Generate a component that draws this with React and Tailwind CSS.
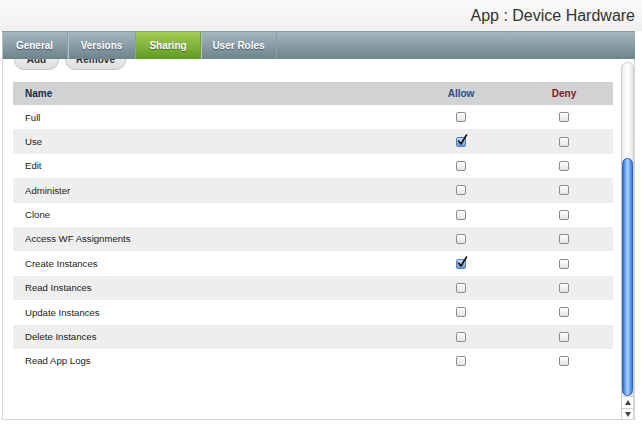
import React from "react";

const rows = [
  ["Full", false],
  ["Use", true],
  ["Edit", false],
  ["Administer", false],
  ["Clone", false],
  ["Access WF Assignments", false],
  ["Create Instances", true],
  ["Read Instances", false],
  ["Update Instances", false],
  ["Delete Instances", false],
  ["Read App Logs", false],
];

function Box({ checked }) {
  if (checked) {
    return (
      <div className="relative w-[10px] h-[10px]">
        <div className="w-[10px] h-[10px] rounded-[2px] border border-[#5a7fb8] bg-gradient-to-b from-[#c9dcf5] to-[#6d9ad8]" />
        <svg className="absolute left-[1px] top-[-3px]" width="11" height="12" viewBox="0 0 11 12">
          <path d="M1.5 7 L4 10 L9.5 1" fill="none" stroke="#111" strokeWidth="1.6" strokeLinecap="round" strokeLinejoin="round" />
        </svg>
      </div>
    );
  }
  return (
    <div className="w-[10px] h-[10px] rounded-[2px] border border-[#8c8c8c] bg-gradient-to-b from-[#ffffff] to-[#e4e4e4] shadow-[inset_0_1px_0_#fff]" />
  );
}

const tabs = [
  ["General", 66, false],
  ["Versions", 68, false],
  ["Sharing", 65, true],
  ["User Roles", 76, false],
];

export default function App() {
  return (
    <div
      className="w-[642px] h-[429px] bg-white overflow-hidden flex flex-col"
      style={{ fontFamily: '"Liberation Sans", Arial, sans-serif' }}
    >
      <div className="h-[31px] shrink-0 bg-gradient-to-b from-[#fbfbfb] to-[#efefef] flex items-center justify-end pr-[7px]">
        <span className="text-[16px] text-[#333] leading-none">App : Device Hardware</span>
      </div>
      <div className="mx-[2px] w-[633px] h-[28px] shrink-0 flex bg-gradient-to-b from-[#a5b6be] to-[#6f838d] border-t border-[#8a9aa2]">
        {tabs.map(([t, w, active]) => (
          <div
            key={t}
            style={{ width: w }}
            className={
              "h-full flex items-center justify-center text-[10px] font-bold text-white border-r [text-shadow:0_1px_1px_rgba(0,0,0,0.45)] " +
              (active
                ? "bg-gradient-to-b from-[#a3cc55] to-[#5f9b22] border-[#6f9e34]"
                : "border-[#8d9ea6] shadow-[inset_1px_0_0_#b3c2c9]")
            }
          >
            {t}
          </div>
        ))}
      </div>
      <div className="mx-[2px] w-[633px] h-[361px] shrink-0 border-l border-r border-b border-[#d6d6d6] overflow-hidden flex">
        <div className="flex-1 pl-[10px] pr-[7px]">
          <div className="flex gap-[6px] mt-[-10px] pl-[1px]">
            <div className="w-[45px] h-[21px] rounded-[10px] border border-[#c6c6c6] bg-gradient-to-b from-[#f4f4f4] to-[#dedede] flex items-center justify-center text-[10px] font-bold text-[#333]">
              Add
            </div>
            <div className="w-[61px] h-[21px] rounded-[10px] border border-[#c6c6c6] bg-gradient-to-b from-[#f4f4f4] to-[#dedede] flex items-center justify-center text-[10px] font-bold text-[#333]">
              Remove
            </div>
          </div>
          <div className="mt-[12px] w-[600px]">
            <div className="h-[23px] flex items-center bg-[#d1d2d4] text-[10px] font-bold">
              <div className="flex-1 pl-[12px] text-[#1c2a4e]">Name</div>
              <div className="w-[108px] text-center text-[#2c4d7e]">Allow</div>
              <div className="w-[98px] text-center text-[#7b1e1e]">Deny</div>
            </div>
            {rows.map(([name, allow], i) => (
              <div
                key={name}
                className={"h-[24.4px] flex items-center text-[9.6px] text-[#222] " + (i % 2 === 1 ? "bg-[#eeeeee]" : "bg-white")}
              >
                <div className="flex-1 pl-[12px] pt-[1px]">{name}</div>
                <div className="w-[108px] flex justify-center"><Box checked={allow} /></div>
                <div className="w-[98px] flex justify-center"><Box checked={false} /></div>
              </div>
            ))}
          </div>
        </div>
        <div className="w-[13px] flex flex-col pt-[3px]">
          <div className="flex-1 flex flex-col rounded-t-[6px] border border-[#cfcfcf] bg-gradient-to-r from-[#e9e9e9] via-[#ffffff] to-[#e6e6e6] overflow-hidden">
            <div className="h-[95px] shrink-0" />
            <div className="flex-1 rounded-[6px] border border-[#2b5fc4] bg-gradient-to-r from-[#2f6fe0] via-[#a9d2ff] to-[#3b7ae6]" />
          </div>
          <div className="h-[11px] flex items-center justify-center border-l border-r border-[#cfcfcf] bg-white">
            <svg width="6" height="5" viewBox="0 0 6 5"><path d="M3 0 L6 5 L0 5 Z" fill="#444" /></svg>
          </div>
          <div className="h-[11px] flex items-center justify-center border-l border-r border-t border-[#cfcfcf] bg-white">
            <svg width="6" height="5" viewBox="0 0 6 5"><path d="M0 0 L6 0 L3 5 Z" fill="#444" /></svg>
          </div>
        </div>
      </div>
    </div>
  );
}
